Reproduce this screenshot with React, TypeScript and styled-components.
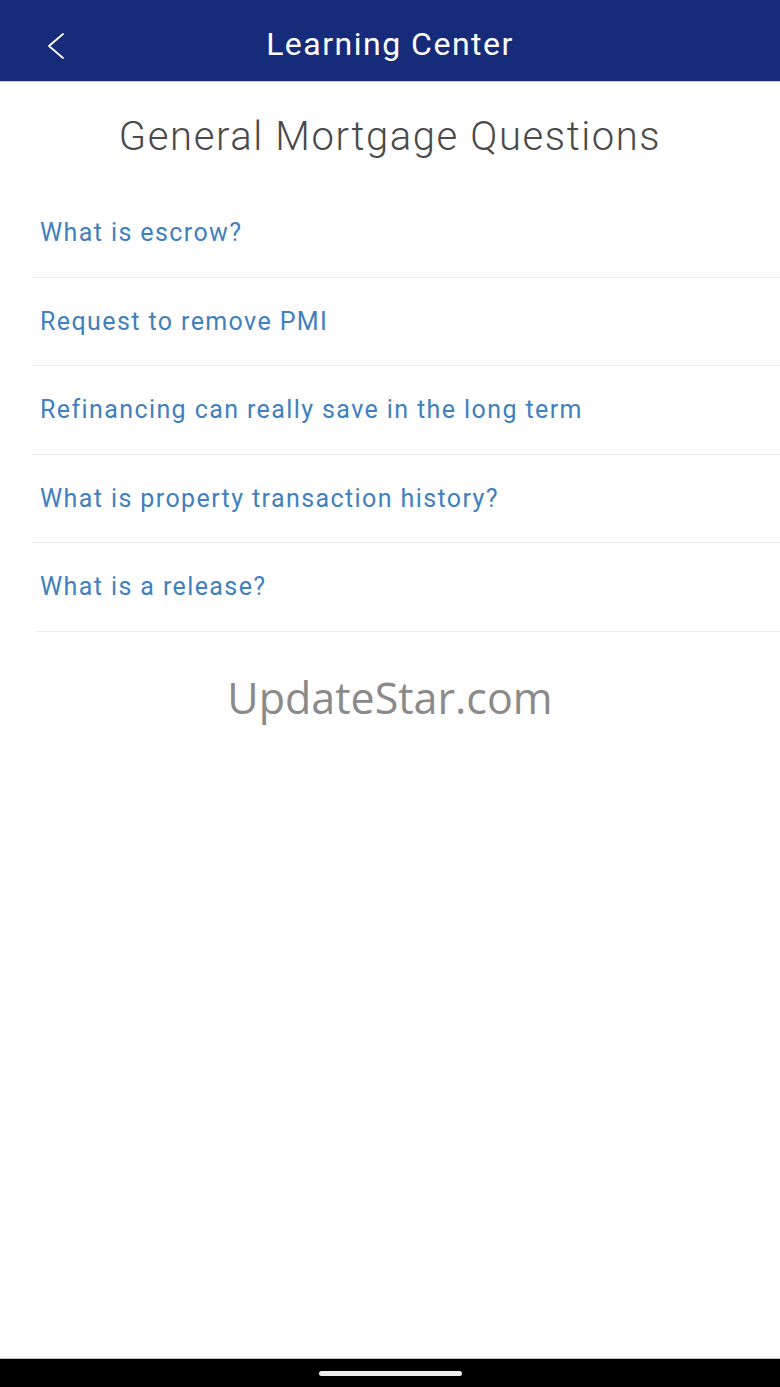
import React from 'react';
import styled, { createGlobalStyle } from 'styled-components';

const GlobalStyle = createGlobalStyle`
  html, body {
    margin: 0;
    padding: 0;
    background: #ffffff;
    font-family: 'Roboto', 'Liberation Sans', sans-serif;
  }
  * {
    box-sizing: border-box;
  }
`;

const Screen = styled.div`
  display: flex;
  flex-direction: column;
  width: 780px;
  height: 1387px;
  background: #ffffff;
  overflow: hidden;
`;

const Header = styled.header`
  position: relative;
  display: flex;
  align-items: center;
  justify-content: center;
  height: 82px;
  padding-top: 7px;
  flex-shrink: 0;
  background: #162b7a;
  border-bottom: 1px solid #c9cfe2;
`;

const BackButton = styled.button`
  position: absolute;
  left: 46px;
  top: 32px;
  width: 20px;
  height: 28px;
  padding: 0;
  border: none;
  background: transparent;
  display: flex;
  align-items: center;
  justify-content: center;
  cursor: pointer;
`;

const HeaderTitle = styled.h1`
  margin: 0;
  font-size: 32px;
  font-weight: 400;
  color: #ffffff;
  letter-spacing: 1.5px;
`;

const PageTitle = styled.h2`
  margin: 31px 0 28px;
  font-size: 40px;
  line-height: 48px;
  font-weight: 300;
  color: #4a4a4a;
  text-align: center;
  letter-spacing: 1.6px;
`;

const QuestionList = styled.ul`
  list-style: none;
  margin: 0;
  padding: 0;
`;

const QuestionRow = styled.li<{ $inset: number }>`
  display: flex;
  align-items: center;
  height: 88.5px;
  margin-left: ${(p) => p.$inset}px;
  padding-left: ${(p) => 40 - p.$inset}px;
  border-bottom: 1px solid #ececec;
  font-size: 25px;
  letter-spacing: 1.4px;
  color: #3f80c0;
  cursor: pointer;
`;

const Watermark = styled.div`
  margin-top: 36px;
  text-align: center;
  font-family: 'Open Sans', 'Noto Sans', sans-serif;
  font-size: 43px;
  line-height: 60px;
  color: #8a8a8a;
`;

const Spacer = styled.div`
  flex: 1;
`;

const NavBar = styled.div`
  display: flex;
  align-items: center;
  justify-content: center;
  height: 29px;
  flex-shrink: 0;
  background: #000000;
  border-top: 1px solid #bdbdbd;
`;

const HomeHandle = styled.div`
  width: 143px;
  height: 5px;
  border-radius: 3px;
  background: #ededed;
`;

const questions = [
  'What is escrow?',
  'Request to remove PMI',
  'Refinancing can really save in the long term',
  'What is property transaction history?',
  'What is a release?',
];

const App: React.FC = () => {
  return (
    <>
      <GlobalStyle />
      <Screen>
        <Header>
          <BackButton aria-label="Back">
            <svg width="20" height="28" viewBox="0 0 20 28" fill="none">
              <path d="M17 2 L3 14 L17 26" stroke="#ffffff" strokeWidth="1.8" strokeLinecap="round" strokeLinejoin="round" />
            </svg>
          </BackButton>
          <HeaderTitle>Learning Center</HeaderTitle>
        </Header>
        <PageTitle>General Mortgage Questions</PageTitle>
        <QuestionList>
          {questions.map((q, i) => (
            <QuestionRow key={q} $inset={i === questions.length - 1 ? 36 : 32}>
              {q}
            </QuestionRow>
          ))}
        </QuestionList>
        <Watermark>UpdateStar.com</Watermark>
        <Spacer />
        <NavBar>
          <HomeHandle />
        </NavBar>
      </Screen>
    </>
  );
};

export default App;
